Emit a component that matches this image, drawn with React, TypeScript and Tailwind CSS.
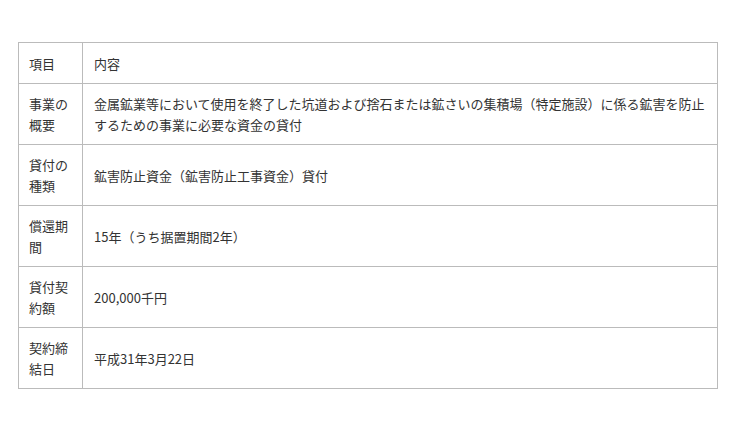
import React from 'react';

const rows: [string, string][] = [
  ['項目', '内容'],
  ['事業の概要', '金属鉱業等において使用を終了した坑道および捨石または鉱さいの集積場（特定施設）に係る鉱害を防止するための事業に必要な資金の貸付'],
  ['貸付の種類', '鉱害防止資金（鉱害防止工事資金）貸付'],
  ['償還期間', '15年（うち据置期間2年）'],
  ['貸付契約額', '200,000千円'],
  ['契約締結日', '平成31年3月22日'],
];

export default function App() {
  return (
    <div className="w-[740px] h-[429px] bg-white pt-[42px] pl-[18px] font-['Noto_Sans_CJK_JP',sans-serif] text-[13px] leading-[21px] text-[#333]">
      <table className="w-[700px] border-collapse border border-[#bbb]">
        <tbody>
          {rows.map(([label, value], i) => (
            <tr key={i} className="border-b border-[#bbb]">
              <td className={`w-[64px] border-r border-[#bbb] px-[10px] align-middle ${i === 0 ? 'pt-[10px] pb-[9px]' : 'py-[9px]'}`}>{label}</td>
              <td className={`px-[11px] align-middle ${i === 0 ? 'pt-[10px] pb-[9px]' : 'py-[9px]'}`}>{value}</td>
            </tr>
          ))}
        </tbody>
      </table>
    </div>
  );
}
